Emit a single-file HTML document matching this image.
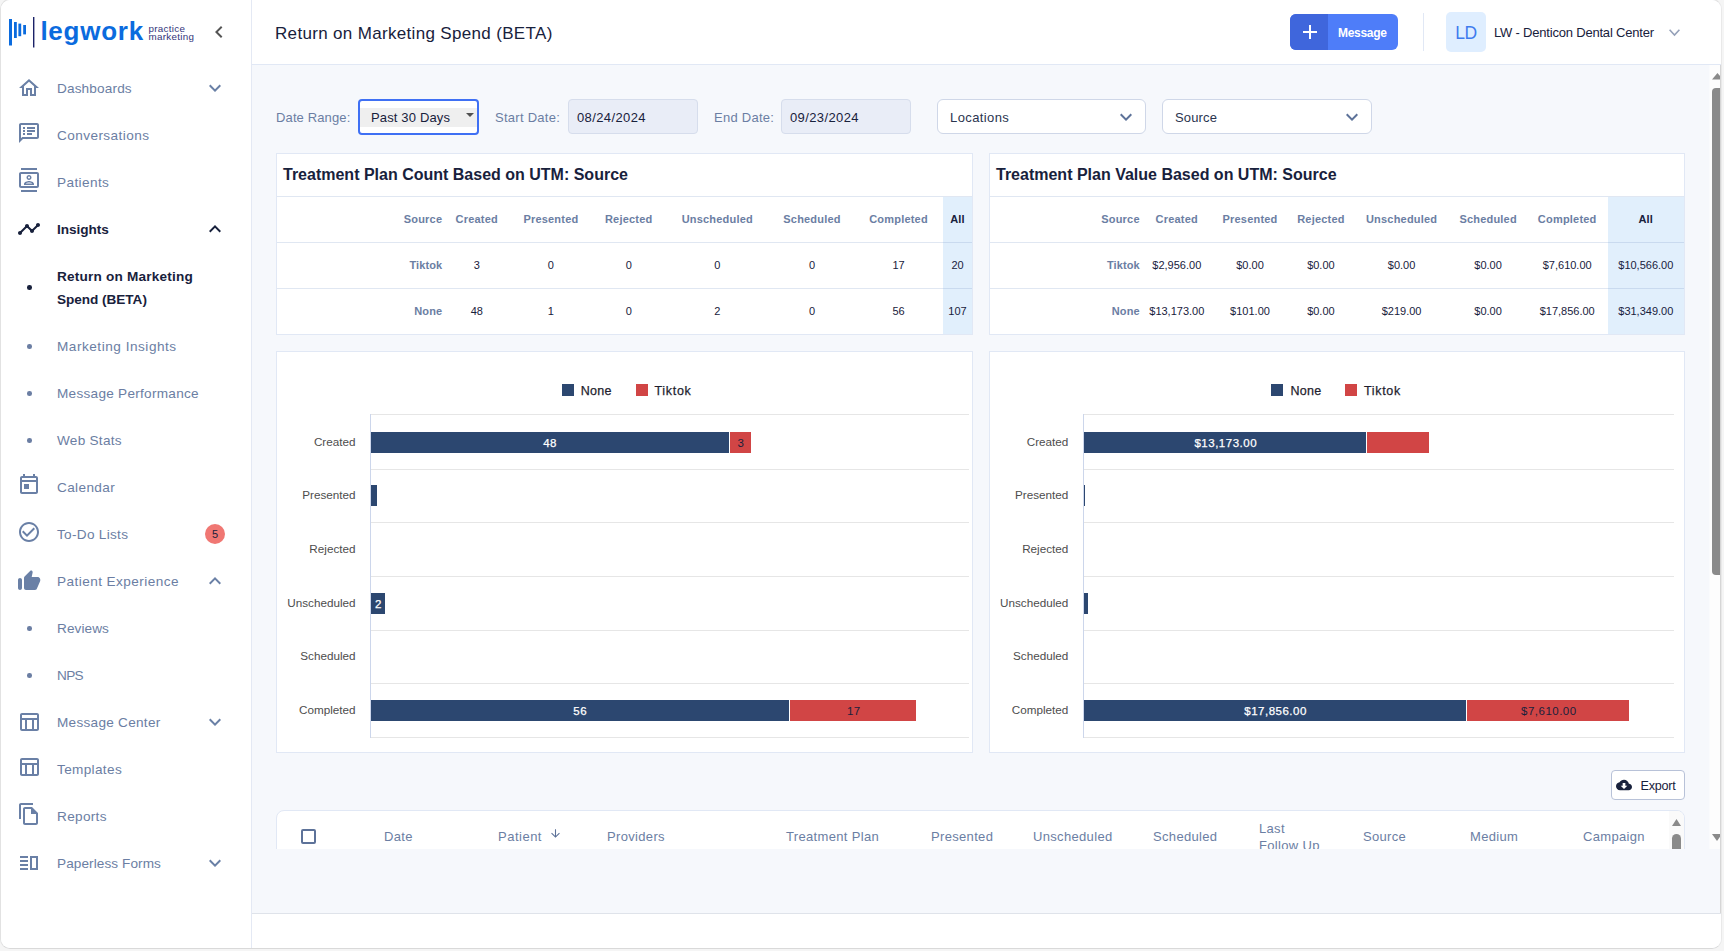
<!DOCTYPE html>
<html lang="en">
<head>
<meta charset="utf-8">
<title>Return on Marketing Spend (BETA)</title>
<style>
*{box-sizing:border-box;margin:0;padding:0}
html,body{width:1724px;height:951px;overflow:hidden;background:#f5f5f5;font-family:"Liberation Sans",sans-serif;}
#app{position:absolute;left:0;top:-1px;width:1722px;height:950px;border:1px solid #e2e2e2;border-right-color:#e9e9e9;border-bottom-color:#d9d9d9;border-radius:10px;background:#f6f8fc;overflow:hidden;}
.abs{position:absolute}
/* ---------- sidebar ---------- */
#side{position:absolute;left:0;top:0;width:251px;height:948px;background:#fff;border-right:1px solid #e4e9f4;}
.nav{position:absolute;left:0;width:250px;height:47px;color:#6b7ea3;font-size:13.6px;letter-spacing:.35px;line-height:23px;}
.nav .ic{position:absolute;left:16px;top:8.5px;width:24px;height:24px;fill:#6a80a6;}
.nav .tx{position:absolute;left:56px;top:12px;white-space:nowrap}
.nav.ex .ic{top:11px}
.nav .chev{position:absolute;left:202px;top:11px;width:24px;height:24px;fill:#6a80a6;}
.nav.act{color:#18213c;font-weight:bold}
.nav.act .ic,.nav.act .chev{fill:#18213c}
.sub{position:absolute;left:0;width:250px;color:#6b7ea3;font-size:13.6px;letter-spacing:.35px;line-height:23px;}
.sub .dot{position:absolute;left:26.2px;width:4.6px;height:4.6px;border-radius:50%;background:#6b7ea3;}
.sub .tx{position:absolute;left:56px;white-space:nowrap}
.sub.act{color:#18213c;font-weight:bold}
.sub.act .dot{background:#18213c}
.badge{position:absolute;left:204px;top:13px;width:20px;height:20px;border-radius:50%;background:#f07773;color:#18213c;font-size:11px;line-height:20px;text-align:center;letter-spacing:0;font-weight:normal}
/* ---------- header ---------- */
#head{position:absolute;left:251px;top:0;width:1469px;height:65px;background:#fff;border-bottom:1px solid #e1e8f5;}
#title{position:absolute;left:23px;top:22px;font-size:17px;line-height:24px;color:#18213c;letter-spacing:.33px;white-space:nowrap}
#foot{position:absolute;left:251px;top:913px;width:1469px;height:36px;background:#fff;border-top:1px solid #dfe3ea;}

/* ---------- header right ---------- */
#msg{position:absolute;left:1038px;top:14px;width:108px;height:36px;border-radius:6px;background:#4e7df9;overflow:hidden;color:#fff;font-size:13px;font-weight:bold;}
#msg .pl{position:absolute;left:0;top:0;width:38px;height:36px;background:#3f66dc}
#msg .t{position:absolute;left:48px;top:11px;line-height:16px;letter-spacing:-.3px;font-size:12px}
#hdiv{position:absolute;left:1171px;top:13px;width:1px;height:38px;background:#e1e8f5}
#ava{position:absolute;left:1194px;top:12px;width:40px;height:40px;border-radius:5px;background:#dfeeff;color:#3e7bee;font-size:17.5px;line-height:42px;text-align:center;letter-spacing:-.5px}
#org{position:absolute;left:1242px;top:25px;font-size:13px;line-height:16px;color:#18213c;white-space:nowrap;letter-spacing:-.2px}
/* ---------- main ---------- */
#main{position:absolute;left:251px;top:65px;width:1469px;height:848px;overflow:hidden}
.lbl{position:absolute;top:45px;font-size:13px;line-height:16px;color:#6b7ea3;letter-spacing:.6px;white-space:nowrap}
.dinp{position:absolute;top:34px;width:130px;height:35px;border:1px solid #d6ddec;border-radius:4px;background:#e9edf7;color:#18213c;font-size:13px;line-height:35px;padding-left:8px;letter-spacing:.39px}
.dd{position:absolute;top:34px;height:35px;border:1px solid #cfd7e8;border-radius:6px;background:#fff;color:#2a344f;font-size:13px;line-height:35px;padding-left:12px;letter-spacing:.4px}
.dd svg{position:absolute;right:7px;top:5px;width:24px;height:24px;fill:#5d7299}
.card{position:absolute;background:#fff;border:1px solid #e1e8f5}
.card h3{position:absolute;left:6px;top:11px;font-size:16px;line-height:20px;color:#18213c;font-weight:bold;white-space:nowrap;letter-spacing:0}
.tr{position:absolute;left:0;right:0;height:46px;border-top:1px solid rgba(120,150,200,.23)}
.tr span{position:absolute;top:0;line-height:45px;font-size:11px;color:#18213c;text-align:center;white-space:nowrap;transform:translateX(-50%)}
.tr span.s{transform:none;text-align:right;font-weight:bold;color:#6b7ea3;letter-spacing:.1px}
.tr.h span{font-weight:bold;color:#6b7ea3;letter-spacing:.2px}
.tr.h span.a{color:#18213c}
.allcol{position:absolute;top:43px;bottom:0;background:#e1effc}
.th{position:absolute;top:18px;font-size:13px;line-height:16px;color:#6b7ea3;letter-spacing:.33px;white-space:nowrap}
</style>
</head>
<body>
<div id="app">

<!-- ================= SIDEBAR ================= -->
<div id="side">
  <!-- logo -->
  <svg class="abs" style="left:0;top:0" width="251" height="65" viewBox="0 0 251 65">
    <rect x="8" y="19" width="3" height="26.5" fill="#0b6bde"/>
    <rect x="13" y="22" width="2.8" height="16" fill="#0b6bde"/>
    <rect x="17.4" y="23.6" width="2.8" height="12.6" fill="#0b6bde"/>
    <rect x="22.2" y="25" width="2.8" height="9.4" fill="#0b6bde"/>
    <rect x="32" y="17" width="1.4" height="30.5" fill="#1b2268"/>
  </svg>
  <div class="abs" id="lw" style="left:39.4px;top:16px;font-size:26px;line-height:30px;font-weight:bold;color:#0b6bde;letter-spacing:.75px;white-space:nowrap">legwork</div>
  <div class="abs" id="pm" style="left:147.5px;top:24.7px;font-size:9.8px;line-height:8.4px;color:#33337a;white-space:nowrap;letter-spacing:.3px">practice<br>marketing</div>
  <svg class="abs" style="left:206px;top:20px" width="24" height="24" viewBox="0 0 24 24"><path fill="#555" d="M15.41 7.41L14 6l-6 6 6 6 1.41-1.41L10.83 12z"/></svg>
  <!-- nav -->
  <div class="nav ex" style="top:65px"><svg class="ic" viewBox="0 0 24 24"><path d="M12 5.69l5 4.5V18h-2v-6H9v6H7v-7.81l5-4.5M12 3L2 12h3v8h6v-6h2v6h6v-8h3L12 3z"/></svg><span class="tx" style="letter-spacing:0.15px">Dashboards</span><svg class="chev" viewBox="0 0 24 24"><path d="M16.59 8.59L12 13.17 7.41 8.59 6 10l6 6 6-6z"/></svg></div>
  <div class="nav" style="top:112px"><svg class="ic" viewBox="0 0 24 24"><path d="M20 2H4c-1.1 0-2 .9-2 2v18l4-4h14c1.1 0 2-.9 2-2V4c0-1.1-.9-2-2-2zm0 14H5.17L4 17.17V4h16v12zM6 12h2v2H6zm0-3h2v2H6zm0-3h2v2H6zm4 6h5v2h-5zm0-3h8v2h-8zm0-3h8v2h-8z"/></svg><span class="tx" style="letter-spacing:0.42px">Conversations</span></div>
  <div class="nav" style="top:159px"><svg class="ic" viewBox="0 0 24 24"><path d="M20 4H4c-1.1 0-2 .9-2 2v12c0 1.1.9 2 2 2h16c1.1 0 2-.9 2-2V6c0-1.1-.9-2-2-2zm0 14H4V6h16v12zM4 0h16v2H4zm0 22h16v2H4zm8-10c1.38 0 2.5-1.12 2.5-2.5S13.38 7 12 7 9.5 8.12 9.5 9.5 10.62 12 12 12zm0-3.5c.55 0 1 .45 1 1s-.45 1-1 1-1-.45-1-1 .45-1 1-1zm5 7.49C17 13.9 13.69 13 12 13s-5 .9-5 2.99V17h10v-1.01zm-8.19-.49c.61-.52 2.03-1 3.19-1 1.17 0 2.59.48 3.2 1H8.81z"/></svg><span class="tx" style="letter-spacing:0.4px">Patients</span></div>
  <div class="nav ex act" style="top:206px"><svg class="ic" viewBox="0 0 24 24"><path d="M23 8c0 1.1-.9 2-2 2-.18 0-.35-.02-.51-.07l-3.56 3.55c.05.16.07.34.07.52 0 1.1-.9 2-2 2s-2-.9-2-2c0-.18.02-.36.07-.52l-2.55-2.55c-.16.05-.34.07-.52.07s-.36-.02-.52-.07l-4.55 4.56c.05.16.07.33.07.51 0 1.1-.9 2-2 2s-2-.9-2-2 .9-2 2-2c.18 0 .35.02.51.07l4.56-4.55C8.02 9.36 8 9.18 8 9c0-1.1.9-2 2-2s2 .9 2 2c0 .18-.02.36-.07.52l2.55 2.55c.16-.05.34-.07.52-.07s.36.02.52.07l3.55-3.56C19.02 8.35 19 8.18 19 8c0-1.1.9-2 2-2s2 .9 2 2z"/></svg><span class="tx" style="letter-spacing:-0.06px">Insights</span><svg class="chev" viewBox="0 0 24 24"><path d="M12 8l-6 6 1.41 1.41L12 10.83l4.59 4.59L18 14z"/></svg></div>
  <div class="sub act" style="top:253px;height:70px"><span class="dot" style="top:32px"></span><span class="tx" style="top:12px;letter-spacing:0.2px">Return on Marketing<br><span style="letter-spacing:-.04px">Spend (BETA)</span></span></div>
  <div class="sub" style="top:323px;height:47px"><span class="dot" style="top:21px"></span><span class="tx" style="top:12px;letter-spacing:0.52px">Marketing Insights</span></div>
  <div class="sub" style="top:370px;height:47px"><span class="dot" style="top:21px"></span><span class="tx" style="top:12px;letter-spacing:0.27px">Message Performance</span></div>
  <div class="sub" style="top:417px;height:47px"><span class="dot" style="top:21px"></span><span class="tx" style="top:12px;letter-spacing:0.26px">Web Stats</span></div>
  <div class="nav" style="top:464px"><svg class="ic" viewBox="0 0 24 24"><path d="M19 3h-1V1h-2v2H8V1H6v2H5c-1.11 0-1.99.9-1.99 2L3 19c0 1.1.89 2 2 2h14c1.1 0 2-.9 2-2V5c0-1.1-.9-2-2-2zm0 16H5V9h14v10zm0-12H5V5h14v2zM7 11h5v5H7z"/></svg><span class="tx" style="letter-spacing:0.36px">Calendar</span></div>
  <div class="nav" style="top:511px"><svg class="ic" viewBox="0 0 24 24"><path d="M16.59 7.58L10 14.17l-3.59-3.58L5 12l5 5 8-8zM12 2C6.48 2 2 6.48 2 12s4.48 10 10 10 10-4.48 10-10S17.52 2 12 2zm0 18c-4.42 0-8-3.58-8-8s3.58-8 8-8 8 3.58 8 8-3.58 8-8 8z"/></svg><span class="tx" style="letter-spacing:0.3px">To-Do Lists</span><span class="badge">5</span></div>
  <div class="nav ex" style="top:558px"><svg class="ic" viewBox="0 0 24 24"><path d="M13.12 2.06L7.58 7.6c-.37.37-.58.88-.58 1.41V19c0 1.1.9 2 2 2h9c.8 0 1.52-.48 1.84-1.21l3.26-7.61C23.94 10.2 22.49 8 20.34 8h-5.65l.95-4.58c.1-.5-.05-1.01-.41-1.37-.59-.58-1.53-.58-2.11.01zM3 21c1.1 0 2-.9 2-2v-8c0-1.1-.9-2-2-2s-2 .9-2 2v8c0 1.1.9 2 2 2z"/></svg><span class="tx" style="letter-spacing:0.44px">Patient Experience</span><svg class="chev" viewBox="0 0 24 24"><path d="M12 8l-6 6 1.41 1.41L12 10.83l4.59 4.59L18 14z"/></svg></div>
  <div class="sub" style="top:605px;height:47px"><span class="dot" style="top:21px"></span><span class="tx" style="top:12px;letter-spacing:0.08px">Reviews</span></div>
  <div class="sub" style="top:652px;height:47px"><span class="dot" style="top:21px"></span><span class="tx" style="top:12px;letter-spacing:-0.68px">NPS</span></div>
  <div class="nav ex" style="top:699px"><svg class="ic" viewBox="0 0 24 24"><path d="M20 3H5c-1.1 0-2 .9-2 2v14c0 1.1.9 2 2 2h15c1.1 0 2-.9 2-2V5c0-1.1-.9-2-2-2zm0 2v3H5V5h15zm-5 14h-5v-9h5v9zM5 10h3v9H5v-9zm12 9v-9h3v9h-3z"/></svg><span class="tx" style="letter-spacing:0.27px">Message Center</span><svg class="chev" viewBox="0 0 24 24"><path d="M16.59 8.59L12 13.17 7.41 8.59 6 10l6 6 6-6z"/></svg></div>
  <div class="nav" style="top:746px"><svg class="ic" viewBox="0 0 24 24"><path d="M20 3H5c-1.1 0-2 .9-2 2v14c0 1.1.9 2 2 2h15c1.1 0 2-.9 2-2V5c0-1.1-.9-2-2-2zm0 2v3H5V5h15zm-5 14h-5v-9h5v9zM5 10h3v9H5v-9zm12 9v-9h3v9h-3z"/></svg><span class="tx" style="letter-spacing:0.34px">Templates</span></div>
  <div class="nav" style="top:793px"><svg class="ic" viewBox="0 0 24 24"><path d="M16 1H4c-1.1 0-2 .9-2 2v14h2V3h12V1zm-1 4H8c-1.1 0-1.99.9-1.99 2L6 21c0 1.1.89 2 1.99 2H19c1.1 0 2-.9 2-2V11l-6-6zM8 21V7h6v5h5v9H8z"/></svg><span class="tx" style="letter-spacing:0.32px">Reports</span></div>
  <div class="nav ex" style="top:840px"><svg class="ic" viewBox="0 0 24 24"><path d="M3 13h8v2H3zm0 4h8v2H3zm0-8h8v2H3zm0-4h8v2H3zm16 2v10h-4V7h4m2-2h-8v14h8V5z"/></svg><span class="tx" style="letter-spacing:0.08px">Paperless Forms</span><svg class="chev" viewBox="0 0 24 24"><path d="M16.59 8.59L12 13.17 7.41 8.59 6 10l6 6 6-6z"/></svg></div>
</div>

<!-- ================= HEADER ================= -->
<div id="head">
  <div id="title">Return on Marketing Spend (BETA)</div>

  <div id="msg"><div class="pl"><svg width="38" height="36" viewBox="0 0 38 36"><path d="M20 11v14M13 18h14" stroke="#fff" stroke-width="2" fill="none"/></svg></div><span class="t">Message</span></div>
  <div id="hdiv"></div>
  <div id="ava">LD</div>
  <div id="org">LW - Denticon Dental Center</div>
  <svg class="abs" style="left:1410px;top:21px" width="24" height="24" viewBox="0 0 24 24"><path fill="none" stroke="#95a1b9" stroke-width="1.6" d="M7.6 8.7L12.5 14 17.4 8.7"/></svg>
</div>

<!-- ================= MAIN ================= -->
<div id="main">

  <!-- filters -->
  <div class="lbl" style="left:24px;letter-spacing:.13px">Date Range:</div>
  <div class="abs" id="sel" style="left:106px;top:34px;width:121px;height:36px;border:2px solid #3f70f4;border-radius:4px;background:#fff">
    <div class="abs" style="left:0;top:7px;width:117px;height:19px;background:#efefef;color:#18213c;font-size:13px;line-height:19px;padding-left:11px;letter-spacing:.15px">Past 30 Days</div>
    <svg class="abs" style="left:106px;top:12px" width="8" height="4" viewBox="0 0 8 4"><path d="M0 0h8L4 4z" fill="#505050"/></svg>
  </div>
  <div class="lbl" style="left:243px;letter-spacing:.26px">Start Date:</div>
  <div class="dinp" style="left:316px">08/24/2024</div>
  <div class="lbl" style="left:462px;letter-spacing:.26px">End Date:</div>
  <div class="dinp" style="left:529px">09/23/2024</div>
  <div class="dd" style="left:685px;width:209px">Locations<svg viewBox="0 0 24 24"><path d="M16.59 8.59L12 13.17 7.41 8.59 6 10l6 6 6-6z"/></svg></div>
  <div class="dd" style="left:910px;width:210px;letter-spacing:.15px">Source<svg viewBox="0 0 24 24"><path d="M16.59 8.59L12 13.17 7.41 8.59 6 10l6 6 6-6z"/></svg></div>
  <div class="card" style="left:24px;top:88px;width:697px;height:182px">
    <div class="allcol" style="left:666px;right:0"></div>
    <h3>Treatment Plan Count Based on UTM: Source</h3>
    <div class="tr h" style="top:42px"><span class="s" style="right:529.8px">Source</span><span style="left:199.8px">Created</span><span style="left:273.9px">Presented</span><span style="left:351.7px">Rejected</span><span style="left:440.3px">Unscheduled</span><span style="left:535px">Scheduled</span><span style="left:621.5px">Completed</span><span class=a style="left:680.5px">All</span></div>
    <div class="tr" style="top:88px"><span class="s" style="right:529.8px">Tiktok</span><span style="left:199.8px">3</span><span style="left:273.9px">0</span><span style="left:351.7px">0</span><span style="left:440.3px">0</span><span style="left:535px">0</span><span style="left:621.5px">17</span><span style="left:680.5px">20</span></div>
    <div class="tr" style="top:134px"><span class="s" style="right:529.8px">None</span><span style="left:199.8px">48</span><span style="left:273.9px">1</span><span style="left:351.7px">0</span><span style="left:440.3px">2</span><span style="left:535px">0</span><span style="left:621.5px">56</span><span style="left:680.5px">107</span></div>
  </div>
  <div class="card" style="left:737px;top:88px;width:696px;height:182px">
    <div class="allcol" style="left:618px;right:0"></div>
    <h3>Treatment Plan Value Based on UTM: Source</h3>
    <div class="tr h" style="top:42px"><span class="s" style="right:544.3px">Source</span><span style="left:186.8px">Created</span><span style="left:260px">Presented</span><span style="left:330.9px">Rejected</span><span style="left:411.6px">Unscheduled</span><span style="left:498.1px">Scheduled</span><span style="left:577.2px">Completed</span><span class=a style="left:655.8px">All</span></div>
    <div class="tr" style="top:88px"><span class="s" style="right:544.3px">Tiktok</span><span style="left:186.8px">$2,956.00</span><span style="left:260px">$0.00</span><span style="left:330.9px">$0.00</span><span style="left:411.6px">$0.00</span><span style="left:498.1px">$0.00</span><span style="left:577.2px">$7,610.00</span><span style="left:655.8px">$10,566.00</span></div>
    <div class="tr" style="top:134px"><span class="s" style="right:544.3px">None</span><span style="left:186.8px">$13,173.00</span><span style="left:260px">$101.00</span><span style="left:330.9px">$0.00</span><span style="left:411.6px">$219.00</span><span style="left:498.1px">$0.00</span><span style="left:577.2px">$17,856.00</span><span style="left:655.8px">$31,349.00</span></div>
  </div>
  <div class="card" style="left:24px;top:286px;width:697px;height:402px"></div>
  <div class="card" style="left:737px;top:286px;width:696px;height:402px"></div>
<svg class="abs" id="charts" style="left:0;top:0" width="1470" height="848" viewBox="0 0 1470 848" shape-rendering="crispEdges">
<style>.lg{font:12.5px "Liberation Sans",sans-serif;fill:#1e1e2e;stroke:#1e1e2e;stroke-width:.25}.ct{font:11.7px "Liberation Sans",sans-serif;fill:#4d4d4d}.bl{font:11.5px "Liberation Sans",sans-serif;letter-spacing:.5px}.bw{stroke:#fff;stroke-width:.25}</style>
<path d="M118 349.5H717" stroke="#e6e6e6"/><path d="M118 404.5H717" stroke="#e6e6e6"/><path d="M118 457.5H717" stroke="#e6e6e6"/><path d="M118 511.5H717" stroke="#e6e6e6"/><path d="M118 565.5H717" stroke="#e6e6e6"/><path d="M118 618.5H717" stroke="#e6e6e6"/><path d="M118 672.5H717" stroke="#e6e6e6"/><path d="M118.5 349V673" stroke="#ccd6eb"/><rect x="310" y="319" width="12" height="12" fill="#2c4770"/><text x="328.70000000000005" y="329.8" class="lg" letter-spacing=".3">None</text><rect x="383.70000000000005" y="319" width="12" height="12" fill="#d14545"/><text x="402.5" y="329.8" class="lg" letter-spacing=".7">Tiktok</text><text x="103.5" y="381.1" text-anchor="end" class="ct">Created</text><text x="103.5" y="434.3" text-anchor="end" class="ct">Presented</text><text x="103.5" y="488.0" text-anchor="end" class="ct">Rejected</text><text x="103.5" y="542.2" text-anchor="end" class="ct">Unscheduled</text><text x="103.5" y="595.4" text-anchor="end" class="ct">Scheduled</text><text x="103.5" y="649.0" text-anchor="end" class="ct">Completed</text><rect x="119" y="367" width="358" height="21" fill="#2c4770"/><rect x="478" y="367" width="21" height="21" fill="#d14545"/><rect x="119" y="420" width="6" height="21" fill="#2c4770"/><rect x="119" y="528" width="14" height="21" fill="#2c4770"/><rect x="119" y="635" width="418" height="21" fill="#2c4770"/><rect x="538" y="635" width="126" height="21" fill="#d14545"/><text x="298.04999999999995" y="382" text-anchor="middle" class="bl bw" fill="#fff">48</text><text x="488.85" y="382" text-anchor="middle" class="bl" fill="#18213c">3</text><text x="126.44999999999999" y="543" text-anchor="middle" class="bl bw" fill="#fff">2</text><text x="328.25" y="650" text-anchor="middle" class="bl bw" fill="#fff">56</text><text x="601.85" y="650" text-anchor="middle" class="bl" fill="#18213c">17</text>
<path d="M831 349.5H1422" stroke="#e6e6e6"/><path d="M831 404.5H1422" stroke="#e6e6e6"/><path d="M831 457.5H1422" stroke="#e6e6e6"/><path d="M831 511.5H1422" stroke="#e6e6e6"/><path d="M831 565.5H1422" stroke="#e6e6e6"/><path d="M831 618.5H1422" stroke="#e6e6e6"/><path d="M831 672.5H1422" stroke="#e6e6e6"/><path d="M831.5 349V673" stroke="#ccd6eb"/><rect x="1018.9000000000001" y="319" width="12" height="12" fill="#2c4770"/><text x="1038.5" y="329.8" class="lg" letter-spacing=".3">None</text><rect x="1092.7" y="319" width="12" height="12" fill="#d14545"/><text x="1111.9" y="329.8" class="lg" letter-spacing=".7">Tiktok</text><text x="816.3" y="381.1" text-anchor="end" class="ct">Created</text><text x="816.3" y="434.3" text-anchor="end" class="ct">Presented</text><text x="816.3" y="488.0" text-anchor="end" class="ct">Rejected</text><text x="816.3" y="542.2" text-anchor="end" class="ct">Unscheduled</text><text x="816.3" y="595.4" text-anchor="end" class="ct">Scheduled</text><text x="816.3" y="649.0" text-anchor="end" class="ct">Completed</text><rect x="832" y="367" width="282" height="21" fill="#2c4770"/><rect x="1115" y="367" width="62" height="21" fill="#d14545"/><rect x="832" y="420" width="1.3" height="21" fill="#2c4770"/><rect x="832" y="528" width="4.3" height="21" fill="#2c4770"/><rect x="832" y="635" width="382" height="21" fill="#2c4770"/><rect x="1215" y="635" width="161.5" height="21" fill="#d14545"/><text x="973.75" y="382" text-anchor="middle" class="bl bw" fill="#fff">$13,173.00</text><text x="1023.55" y="650" text-anchor="middle" class="bl bw" fill="#fff">$17,856.00</text><text x="1296.85" y="650" text-anchor="middle" class="bl" fill="#18213c">$7,610.00</text>
</svg>
  <!-- export -->
  <div class="abs" style="left:1359px;top:705px;width:74px;height:30px;border:1px solid #b8c2d8;border-radius:4px;background:#fff">
    <svg class="abs" style="left:4px;top:6px" width="16" height="16" viewBox="0 0 24 24"><path fill="#18213c" d="M19.35 10.04C18.67 6.59 15.64 4 12 4 9.11 4 6.6 5.64 5.35 8.04 2.34 8.36 0 10.91 0 14c0 3.31 2.69 6 6 6h13c2.76 0 5-2.24 5-5 0-2.64-2.05-4.78-4.65-4.96zM17 13l-5 5-5-5h3V9h4v4h3z"/></svg>
    <span class="abs" style="left:28.5px;top:7px;font-size:12.6px;line-height:16px;color:#18213c;letter-spacing:-.25px">Export</span>
  </div>
  <!-- bottom table (clipped) -->
  <div class="abs" id="btw" style="left:0;top:0;width:1470px;height:784px;overflow:hidden">
   <div class="abs" id="bt" style="left:24px;top:745px;width:1409px;height:120px;border:1px solid #e1e8f5;border-radius:8px;background:#fff;overflow:hidden">
    <div class="abs" style="left:24px;top:18px;width:15px;height:15px;border:2px solid #5d7299;border-radius:2px"></div>
    <span class="th" style="left:107px">Date</span>
    <span class="th" style="left:221px;letter-spacing:.5px">Patient</span>
    <svg class="abs" style="left:272px;top:16px" width="13" height="13" viewBox="0 0 24 24"><path fill="#5d7299" d="M20 12l-1.41-1.41L13 16.17V4h-2v12.17l-5.58-5.59L4 12l8 8 8-8z"/></svg>
    <span class="th" style="left:330px">Providers</span>
    <span class="th" style="left:509px">Treatment Plan</span>
    <span class="th" style="left:654px">Presented</span>
    <span class="th" style="left:756px">Unscheduled</span>
    <span class="th" style="left:876px">Scheduled</span>
    <span class="th" style="left:982px;top:10px;line-height:16.5px">Last<br>Follow Up</span>
    <span class="th" style="left:1086px">Source</span>
    <span class="th" style="left:1193px">Medium</span>
    <span class="th" style="left:1306px">Campaign</span>
    <!-- inner scrollbar -->
    <div class="abs" style="left:1392px;top:0;width:15px;height:120px;background:#fafafa"></div>
    <svg class="abs" style="left:1392px;top:0" width="15" height="40" viewBox="0 0 15 40"><path d="M3 15L7.5 8 12 15z" fill="#8a8a8a"/><path d="M3 40V27.5a4.5 4.5 0 0 1 9 0V40z" fill="#8a8a8a"/></svg>
   </div>
  </div>
  <!-- outer scrollbar -->
  <div class="abs" style="left:1468px;top:0;width:1px;height:848px;background:#d6d6d6"></div>
  <div class="abs" style="left:1457px;top:0;width:1px;height:784px;background:#fafbfd"></div>
  <div class="abs" style="left:1458px;top:0;width:10px;height:784px;background:#fdfdfd"></div>
  <svg class="abs" style="left:1458px;top:0" width="10" height="784" viewBox="0 0 10 784"><path d="M2 14.5L7.5 7.9 13 14.5z" fill="#8a8a8a"/><path d="M2 27a4 4 0 0 1 4-4h4v487h-4a4 4 0 0 1-4-4z" fill="#8a8a8a"/><path d="M2 769.1L7 776 12 769.1z" fill="#8a8a8a"/></svg>
</div>

<div id="foot"></div>
</div>
</body>
</html>
